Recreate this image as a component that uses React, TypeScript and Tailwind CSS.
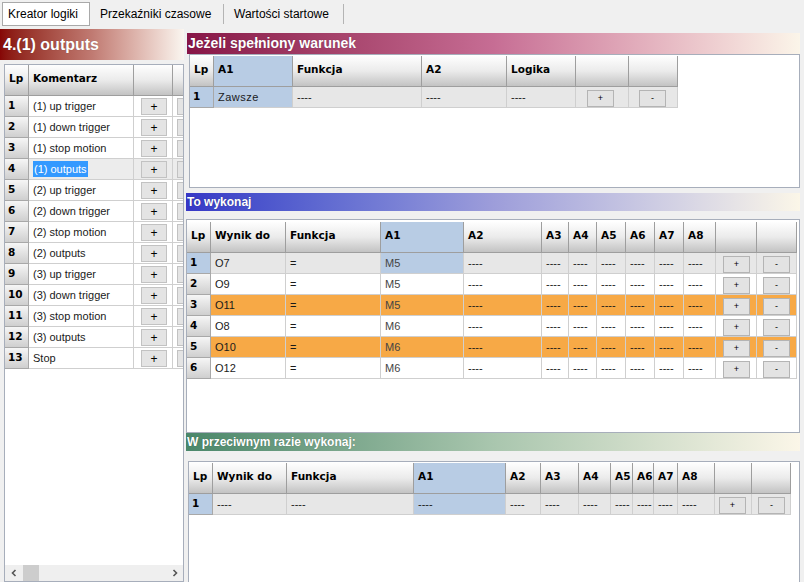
import React from 'react';

const body = { fontFamily: '"Liberation Sans", Arial, sans-serif' };
const bold = { fontFamily: '"DejaVu Sans", Verdana, sans-serif' };

type Tone = 'gray' | 'white' | 'orange' | 'blue' | 'sel';

const toneCls: Record<Tone, string> = {
  gray: 'bg-[#e7e7e7]',
  white: 'bg-white',
  orange: 'bg-[#f7a946]',
  blue: 'bg-[#b8cce4]',
  sel: 'bg-[#ececec]',
};

function Th({ children, blue }: { children?: React.ReactNode; blue?: boolean }) {
  return (
    <div
      style={bold}
      className={`border-r border-b border-[#9e9e9e] pl-[4px] pt-[7px] text-[10.5px] font-bold leading-[13px] text-black ${
        blue ? 'bg-[#b8cce4]' : 'bg-linear-to-b from-[#fefefe] via-[#ebebeb] to-[#c3c3c3]'
      }`}
    >
      {children}
    </div>
  );
}

function Lp({ n, blue }: { n: number; blue?: boolean }) {
  return (
    <div
      style={bold}
      className={`flex items-center border-r border-b border-[#a8a8a8] pl-[3px] text-[10.5px] font-bold text-black ${
        blue ? 'bg-[#b8cce4]' : 'bg-linear-to-b from-[#f6f6f6] to-[#cfcfcf]'
      }`}
    >
      {n}
    </div>
  );
}

function Td({ children, tone }: { children?: React.ReactNode; tone: Tone }) {
  return (
    <div className={`flex items-center overflow-hidden whitespace-nowrap border-r border-b border-[#cfcfcf] pl-[4px] text-[11px] text-[#1a1a1a] ${toneCls[tone]}`}>
      {children}
    </div>
  );
}

function BtnCell({ label, tone, pad }: { label: string; tone: Tone; pad: string }) {
  return (
    <div className={`flex items-end border-r border-b border-[#cfcfcf] ${pad} ${toneCls[tone]}`}>
      <div className="flex h-[17px] w-[27px] items-center justify-center border border-[#b4b4b4] bg-[#e3e3e3] text-[9px] leading-none text-black">
        {label}
      </div>
    </div>
  );
}

function SectionHead({ title, grad, size }: { title: string; grad: string; size: string }) {
  return (
    <div style={body} className={`flex items-center pl-[1px] font-bold text-white bg-linear-to-r ${size} ${grad}`}>
      <span className="[text-shadow:0_0_1px_rgba(0,0,0,0.35)]">{title}</span>
    </div>
  );
}

const leftRows = [
  '(1) up trigger',
  '(1) down trigger',
  '(1) stop motion',
  '(1) outputs',
  '(2) up trigger',
  '(2) down trigger',
  '(2) stop motion',
  '(2) outputs',
  '(3) up trigger',
  '(3) down trigger',
  '(3) stop motion',
  '(3) outputs',
  'Stop',
];

const execRows: { out: string; a1: string; tone: Tone }[] = [
  { out: 'O7', a1: 'M5', tone: 'gray' },
  { out: 'O9', a1: 'M5', tone: 'white' },
  { out: 'O11', a1: 'M5', tone: 'orange' },
  { out: 'O8', a1: 'M6', tone: 'white' },
  { out: 'O10', a1: 'M6', tone: 'orange' },
  { out: 'O12', a1: 'M6', tone: 'white' },
];

const dash = '----';

function LeftPanel() {
  return (
    <div className="flex w-[184px] flex-col">
      <div className="mt-[1px] flex h-[31px] items-center bg-linear-to-r from-[#860606] via-[#c07a72] to-[#faf6f0] pl-[3px]">
        <span style={body} className="text-[16px] font-bold text-white [text-shadow:0_0_1px_rgba(0,0,0,0.3)]">
          4.(1) outputs
        </span>
      </div>
      <div className="mt-[4px] ml-[4px] flex flex-1 flex-col overflow-hidden border border-[#a7aebb] bg-white">
        <div className="flex-1 overflow-hidden">
          <div className="grid h-[31px] w-max grid-cols-[24px_105px_39px_40px]">
            <Th>Lp</Th>
            <Th>Komentarz</Th>
            <Th />
            <Th />
          </div>
          {leftRows.map((r, i) => {
            const sel = i === 3;
            const tone: Tone = sel ? 'sel' : 'white';
            return (
              <div key={i} style={body} className="grid h-[21px] w-max grid-cols-[24px_105px_39px_40px]">
                <Lp n={i + 1} />
                <Td tone={tone}>
                  {sel ? <span className="bg-[#3399ff] px-[1px] text-white">{r}</span> : r}
                </Td>
                <div className={`flex items-end border-r border-b border-[#cfcfcf] pb-[1px] pl-[7px] ${toneCls[tone]}`}>
                  <div className="flex h-[17px] w-[26px] items-center justify-center border border-[#c2c2c2] bg-[#e4e4e4] text-[12px] leading-none text-black">
                    +
                  </div>
                </div>
                {/* second button column is cut off by the panel edge */}
                <div className={`flex items-end border-r border-b border-[#cfcfcf] pb-[1px] pl-[4px] ${toneCls[tone]}`}>
                  <div className="h-[17px] w-[26px] border border-[#c2c2c2] bg-[#e4e4e4]" />
                </div>
              </div>
            );
          })}
        </div>
        <div className="flex h-[16px] items-center bg-[#efefef]">
          <svg width="16" height="16" viewBox="0 0 16 16" className="ml-[1px]">
            <polyline points="9.5,5 6.5,8 9.5,11" fill="none" stroke="#555" strokeWidth="1.6" />
          </svg>
          <div className="ml-[1px] h-[16px] w-[16px] bg-[#cdcdcd]" />
          <div className="flex-1" />
          <svg width="16" height="16" viewBox="0 0 16 16">
            <polyline points="6.5,5 9.5,8 6.5,11" fill="none" stroke="#555" strokeWidth="1.6" />
          </svg>
        </div>
      </div>
    </div>
  );
}

function ConditionSection() {
  const grid = 'grid w-max grid-cols-[24px_79px_129px_85px_69px_53px_49px]';
  return (
    <>
      <div className="mt-[5px] ml-[1px] flex h-[20px] flex-col">
        <SectionHead title="Jeżeli spełniony warunek" size="text-[14px]" grad="from-[#871447] via-[#c66d94] to-[#fbf5e9]" />
      </div>
      <div className="mt-[1px] ml-[3px] h-[134px] border border-[#a7aebb] bg-white pt-[1px]">
        <div className={`${grid} h-[31px]`}>
          <Th>Lp</Th>
          <Th blue>A1</Th>
          <Th>Funkcja</Th>
          <Th>A2</Th>
          <Th>Logika</Th>
          <Th />
          <Th />
        </div>
        <div style={body} className={`${grid} h-[21px]`}>
          <Lp n={1} blue />
          <Td tone="blue">
            <span className="tracking-[0.5px]">Zawsze</span>
          </Td>
          <Td tone="gray">{dash}</Td>
          <Td tone="gray">{dash}</Td>
          <Td tone="gray">{dash}</Td>
          <BtnCell label="+" tone="gray" pad="pl-[11px]" />
          <BtnCell label="-" tone="gray" pad="pl-[10px]" />
        </div>
      </div>
    </>
  );
}

function ExecSection() {
  const grid = 'grid w-max grid-cols-[24px_75px_95px_83px_78px_27px_28px_29px_29px_29px_32px_41px_40px]';
  return (
    <>
      <div className="mt-[5px] flex h-[25px] flex-col">
        <SectionHead title="To wykonaj" size="text-[12px]" grad="from-[#3737c6] via-[#9d9dda] to-[#fbf6e8]" />
      </div>
      <div className="mt-[1px] h-[214px] border border-[#a7aebb] bg-white pt-[2px]">
        <div className={`${grid} h-[31px]`}>
          <Th>Lp</Th>
          <Th>Wynik do</Th>
          <Th>Funkcja</Th>
          <Th blue>A1</Th>
          <Th>A2</Th>
          <Th>A3</Th>
          <Th>A4</Th>
          <Th>A5</Th>
          <Th>A6</Th>
          <Th>A7</Th>
          <Th>A8</Th>
          <Th />
          <Th />
        </div>
        {execRows.map((r, i) => {
          const first = i === 0;
          return (
            <div key={i} style={body} className={`${grid} h-[21px]`}>
              <Lp n={i + 1} blue={first} />
              <Td tone={r.tone}>{r.out}</Td>
              <Td tone={r.tone}>=</Td>
              <Td tone={first ? 'blue' : r.tone}>
                <span className="text-[#444]">{r.a1}</span>
              </Td>
              <Td tone={r.tone}>{dash}</Td>
              <Td tone={r.tone}>{dash}</Td>
              <Td tone={r.tone}>{dash}</Td>
              <Td tone={r.tone}>{dash}</Td>
              <Td tone={r.tone}>{dash}</Td>
              <Td tone={r.tone}>{dash}</Td>
              <Td tone={r.tone}>{dash}</Td>
              <BtnCell label="+" tone={r.tone} pad="pl-[7px]" />
              <BtnCell label="-" tone={r.tone} pad="pl-[6px]" />
            </div>
          );
        })}
      </div>
    </>
  );
}

function ElseSection() {
  const grid = 'grid w-max grid-cols-[24px_74px_127px_92px_35px_38px_32px_22px_21px_24px_37px_37px_39px]';
  return (
    <>
      <div className="flex h-[25px] flex-col">
        <SectionHead title="W przeciwnym razie wykonaj:" size="text-[12px]" grad="from-[#4a876a] via-[#a9c6ae] to-[#fbf6e8]" />
      </div>
      <div className="mt-[3px] ml-[2px] flex-1 border-t border-l border-r border-[#a7aebb] bg-white pt-[1px]">
        <div className={`${grid} h-[31px]`}>
          <Th>Lp</Th>
          <Th>Wynik do</Th>
          <Th>Funkcja</Th>
          <Th blue>A1</Th>
          <Th>A2</Th>
          <Th>A3</Th>
          <Th>A4</Th>
          <Th>A5</Th>
          <Th>A6</Th>
          <Th>A7</Th>
          <Th>A8</Th>
          <Th />
          <Th />
        </div>
        <div style={body} className={`${grid} h-[21px]`}>
          <Lp n={1} blue />
          <Td tone="gray">{dash}</Td>
          <Td tone="gray">{dash}</Td>
          <Td tone="blue">{dash}</Td>
          <Td tone="gray">{dash}</Td>
          <Td tone="gray">{dash}</Td>
          <Td tone="gray">{dash}</Td>
          <Td tone="gray">{dash}</Td>
          <Td tone="gray">{dash}</Td>
          <Td tone="gray">{dash}</Td>
          <Td tone="gray">{dash}</Td>
          <BtnCell label="+" tone="gray" pad="pl-[4px]" />
          <BtnCell label="-" tone="gray" pad="pl-[6px]" />
        </div>
      </div>
    </>
  );
}

export default function App() {
  return (
    <div style={body} className="flex h-[582px] w-[804px] flex-col overflow-hidden bg-[#f0f0f0] text-black">
      {/* tabs */}
      <div className="flex h-[28px] items-start pt-[2px] text-[12px]">
        <div className="ml-[2px] flex h-[24px] w-[88px] items-center border border-[#a9a9a9] bg-white pl-[5px]">
          Kreator logiki
        </div>
        <div className="mt-[2px] flex h-[20px] w-[134px] items-center border-r border-[#b4b4b4] pl-[10px]">
          Przekaźniki czasowe
        </div>
        <div className="mt-[2px] flex h-[20px] w-[120px] items-center border-r border-[#b4b4b4] pl-[10px]">
          Wartości startowe
        </div>
      </div>

      <div className="flex flex-1 overflow-hidden">
        <LeftPanel />
        <div className="ml-[2px] flex flex-1 flex-col pr-[4px]">
          <ConditionSection />
          <ExecSection />
          <ElseSection />
        </div>
      </div>
    </div>
  );
}
